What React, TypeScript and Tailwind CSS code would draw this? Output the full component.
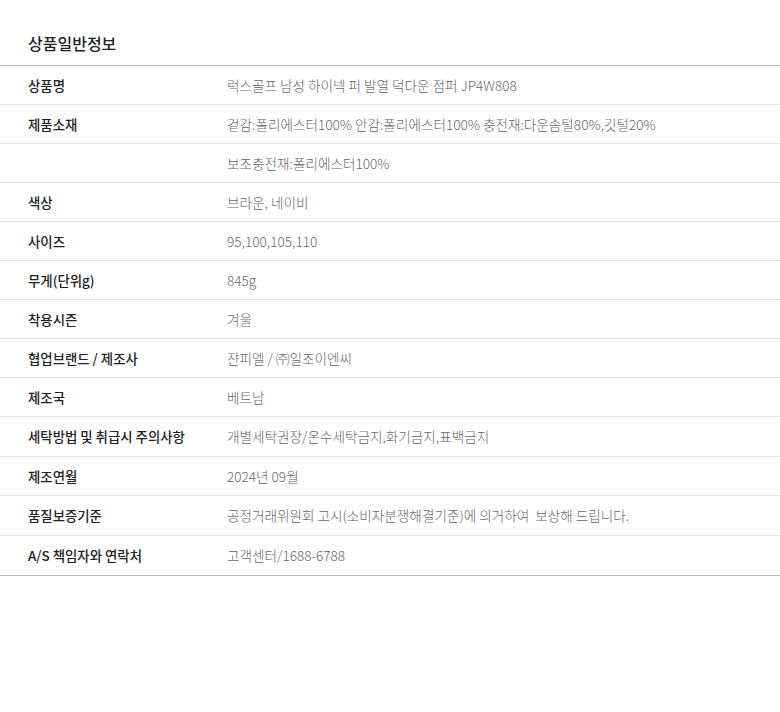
import React from 'react';

const rows: { k: string; v: string; tall?: boolean }[] = [
  { k: '상품명', v: '럭스골프 남성 하이넥 퍼 발열 덕다운 점퍼 JP4W808' },
  { k: '제품소재', v: '겉감:폴리에스터100% 안감:폴리에스터100% 충전재:다운솜털80%,깃털20%' },
  { k: '', v: '보조충전재:폴리에스터100%' },
  { k: '색상', v: '브라운, 네이비' },
  { k: '사이즈', v: '95,100,105,110' },
  { k: '무게(단위g)', v: '845g' },
  { k: '착용시즌', v: '겨울' },
  { k: '협업브랜드 / 제조사', v: '쟌피엘 / ㈜일조이엔씨' },
  { k: '제조국', v: '베트남' },
  { k: '세탁방법 및 취급시 주의사항', v: '개별세탁권장/온수세탁금지,화기금지,표백금지', tall: true },
  { k: '제조연월', v: '2024년 09월' },
  { k: '품질보증기준', v: '공정거래위원회 고시(소비자분쟁해결기준)에 의거하여  보상해 드립니다.', tall: true },
  { k: 'A/S 책임자와 연락처', v: '고객센터/1688-6788' },
];

const App: React.FC = () => {
  return (
    <div className="w-[780px] min-h-[712px] bg-white font-['Noto_Sans_CJK_KR','Noto_Sans',sans-serif]">
      <h2 className="pl-[28px] pt-[32px] pb-[11px] text-[16px] leading-[22px] font-medium text-[#222]">상품일반정보</h2>
      <div className="border-t border-b border-[#b5b5b5]">
        {rows.map((r, i) => (
          <div
            key={i}
            className={`flex items-center ${r.tall ? 'h-[40px]' : 'h-[39px]'} ${i < rows.length - 1 ? 'border-b border-[#e3e3e3]' : ''}`}
          >
            <div className="w-[227px] shrink-0 pl-[28px] text-[13.4px] font-medium text-[#222]">{r.k}</div>
            <div className="text-[13.6px] font-light text-[#666] whitespace-pre">{r.v}</div>
          </div>
        ))}
      </div>
    </div>
  );
};

export default App;
